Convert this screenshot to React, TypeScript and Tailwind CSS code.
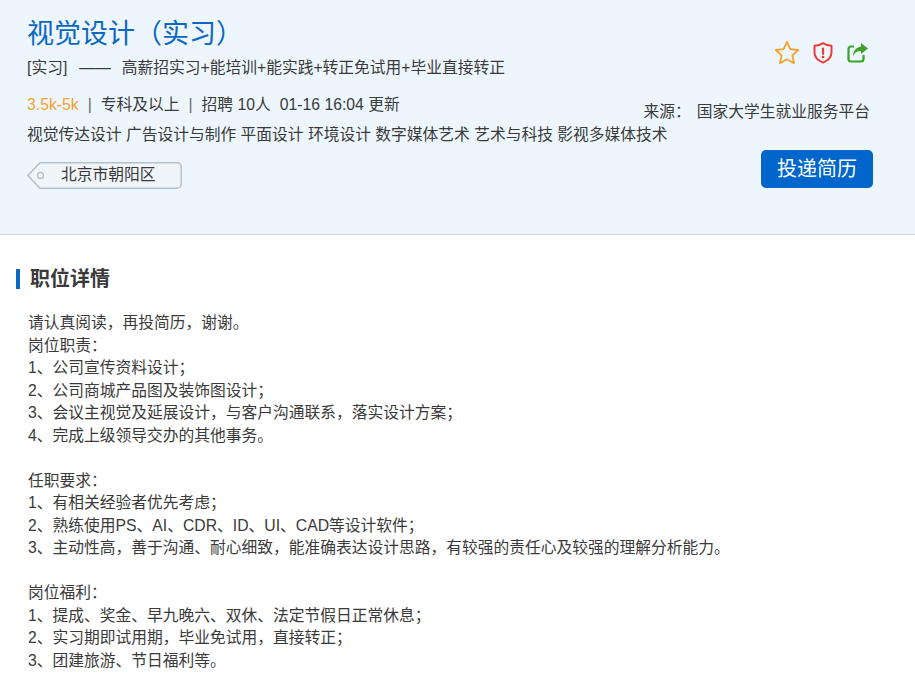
// App.tsx
// Job detail page: blue summary header and the plain-text description below it.
const FONT = "font-['Liberation_Sans','Noto_Sans_CJK_SC',sans-serif]";

const DESCRIPTION = [
  "请认真阅读，再投简历，谢谢。",
  "岗位职责：",
  "1、公司宣传资料设计；",
  "2、公司商城产品图及装饰图设计；",
  "3、会议主视觉及延展设计，与客户沟通联系，落实设计方案；",
  "4、完成上级领导交办的其他事务。",
  "",
  "任职要求：",
  "1、有相关经验者优先考虑；",
  "2、熟练使用PS、AI、CDR、ID、UI、CAD等设计软件；",
  "3、主动性高，善于沟通、耐心细致，能准确表达设计思路，有较强的责任心及较强的理解分析能力。",
  "",
  "岗位福利：",
  "1、提成、奖金、早九晚六、双休、法定节假日正常休息；",
  "2、实习期即试用期，毕业免试用，直接转正；",
  "3、团建旅游、节日福利等。",
];

function StarIcon() {
  return (
    <svg width="26" height="25" viewBox="0 0 26 25" fill="none">
      <path
        d="M13 1.800l3.400 7.300 7.800.9-5.800 5.400 1.600 7.800-7-3.900-7 3.900 1.600-7.800L1.800 10l7.800-.9z"
        stroke="#f5a12c"
        strokeWidth="1.800"
        strokeLinejoin="round"
      />
    </svg>
  );
}

function ShieldIcon() {
  return (
    <svg width="20" height="22" viewBox="0 0 20 22" fill="none">
      <path
        d="M10 1.200c2.400 1.600 5 2.400 8.500 2.600v6.600c0 4.600-3.400 8-8.500 10.200-5.100-2.200-8.500-5.600-8.500-10.200V3.800c3.500-.2 6.100-1 8.500-2.600z"
        stroke="#ee3b3b"
        strokeWidth="2"
        strokeLinejoin="round"
      />
      <path d="M10 6.500v5.500" stroke="#ee3b3b" strokeWidth="2.200" strokeLinecap="round" />
      <circle cx="10" cy="15" r="1.300" fill="#ee3b3b" />
    </svg>
  );
}

function ShareIcon() {
  return (
    <svg width="21" height="20" viewBox="0 0 21 20" fill="none">
      <path
        d="M7 3.500H4A2.500 2.500 0 0 0 1.500 6v10A2.500 2.500 0 0 0 4 18.500h10a2.500 2.500 0 0 0 2.500-2.500v-4"
        stroke="#3da12a"
        strokeWidth="2.200"
      />
      <path d="M14 0l7 5.500-7 5.500V8c-4 0-6.500 1.500-8 5.500C6 8 9 4.300 14 3.500z" fill="#3da12a" />
    </svg>
  );
}

function LocationTag({ label }: { label: string }) {
  return (
    <div className="relative flex h-[27px] w-[155px] items-center pl-[34px] text-[15.750px] text-[#3a3a3a]">
      <svg className="absolute inset-0" width="155" height="27" viewBox="0 0 155 27" fill="none">
        <path
          d="M13 .75h137a4.250 4.250 0 0 1 4.250 4.250v17a4.250 4.250 0 0 1-4.250 4.250H13L.9 13.500z"
          fill="#f0f5fa"
          stroke="#b6bfc6"
          strokeWidth="1.500"
        />
        <circle cx="13.500" cy="13.500" r="3" stroke="#b6bfc6" strokeWidth="1.300" />
      </svg>
      <span className="relative -top-[1px]">{label}</span>
    </div>
  );
}

function JobHeader() {
  return (
    <header className="flex h-[235px] justify-between border-b border-[#cfd8dc] bg-[#eef6fd] pl-[27px] pr-[42px]">
      <div className="flex min-w-0 flex-1 flex-col">
        <h1 className="mt-[15px] text-[27px] leading-[38px] text-[#0a68c4]">视觉设计（实习）</h1>
        <p className="mt-[3px] text-[15.750px] leading-[24px] text-[#3a3a3a]">
          [实习]<span className="ml-[12px] mr-[11px]">——</span>高薪招实习+能培训+能实践+转正免试用+毕业直接转正
        </p>
        <p className="mt-[13px] text-[15.750px] leading-[24px] text-[#3a3a3a]">
          <span className="text-[#f5a12c]">3.5k-5k</span>
          <span className="mx-[9px] text-[#666]">|</span>专科及以上
          <span className="mx-[9px] text-[#666]">|</span>招聘 10人<span className="ml-[9px]">01-16 16:04 更新</span>
        </p>
        <p className="mt-[6px] whitespace-nowrap text-[15.750px] leading-[24px] text-[#3a3a3a]">
          视觉传达设计 广告设计与制作 平面设计 环境设计 数字媒体艺术 艺术与科技 影视多媒体技术
        </p>
        <div className="mt-[15px]">
          <LocationTag label="北京市朝阳区" />
        </div>
      </div>
      <div className="flex shrink-0 flex-col items-end">
        <div className="mr-[5px] mt-[40px] flex items-center">
          <StarIcon />
          <div className="ml-[13px] mr-[14px]">
            <ShieldIcon />
          </div>
          <ShareIcon />
        </div>
        <p className="mr-[3px] mt-[35px] text-[15.750px] leading-[24px] text-[#3a3a3a]">
          来源：<span className="ml-[6px]">国家大学生就业服务平台</span>
        </p>
        <button className="mt-[26px] h-[38px] w-[112px] rounded-[5px] bg-[#0066cc] text-[20px] text-white">
          投递简历
        </button>
      </div>
    </header>
  );
}

export default function App() {
  return (
    <div className={`${FONT} h-[685px] w-[915px] overflow-hidden bg-white`}>
      <JobHeader />
      <section className="pl-[16px]">
        <h2 className="mt-[34px] border-l-[4px] border-[#0a68c4] pl-[10px] text-[20px] font-bold leading-[20px] text-[#3a3a3a]">
          职位详情
        </h2>
        <div className="mt-[23px] pl-[12px] text-[15.750px] text-[#3a3a3a]">
          {DESCRIPTION.map((line, i) => (
            <div key={i} className="h-[22.530px] whitespace-nowrap leading-[22.530px]">
              {line}
            </div>
          ))}
        </div>
      </section>
    </div>
  );
}
